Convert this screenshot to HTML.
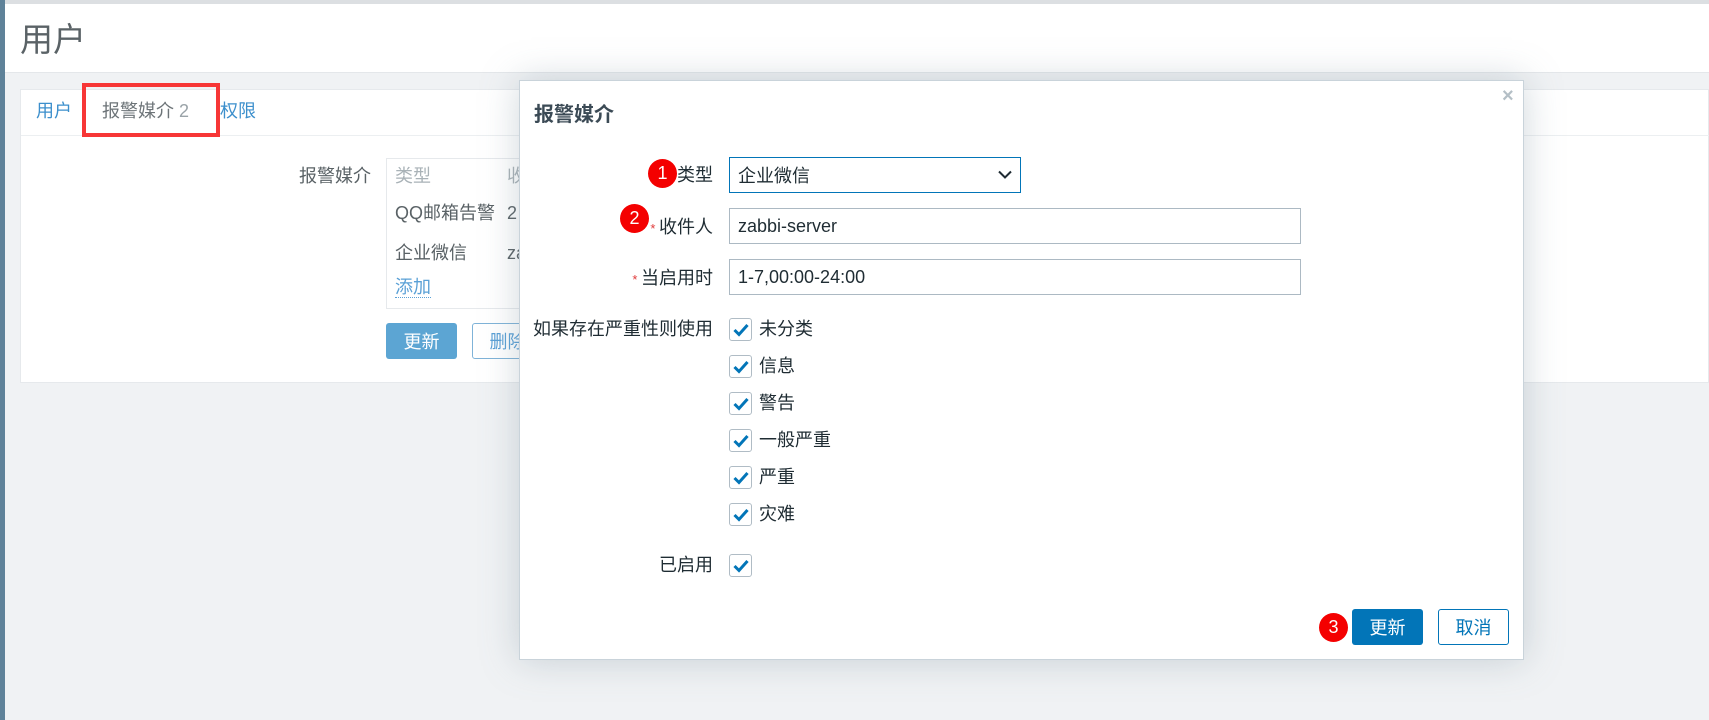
<!DOCTYPE html>
<html><head><meta charset="utf-8"><style>
*{box-sizing:border-box;margin:0;padding:0}
body{width:1709px;height:720px;overflow:hidden;background:#f0f2f4;font-family:"Liberation Sans","Noto Sans CJK SC",sans-serif;font-size:18px;color:#1f2c33;position:relative}
.abs{position:absolute}
.lbar{left:0;top:0;width:5px;height:720px;background:#5f8299}
.topl{left:0;top:0;width:1709px;height:4px;background:#dcdfe2}
.head{left:5px;top:4px;width:1704px;height:69px;background:#fff;border-bottom:1px solid #e4e7ea}
.head span{position:absolute;left:15px;top:18px;font-size:33px;line-height:36px;color:#5a6266}
.panel{left:20px;top:89px;width:1689px;height:294px;background:#fff;border:1px solid #e6e9ec}
.tabline{left:21px;top:135px;width:1688px;height:1px;background:#eceff1}
.t{font-size:18px;line-height:20px;white-space:nowrap}
.redbox{left:82px;top:83px;width:138px;height:54px;border:4px solid #f73636}
.btn{height:36px;border-radius:3px;font-size:18px;display:flex;align-items:center;justify-content:center}
.dlg{left:519px;top:80px;width:1005px;height:580px;background:#fff;border:1px solid #c9d3da;box-shadow:0 0 35px rgba(120,140,155,.35)}
.lab{width:200px;text-align:right;font-size:18px;line-height:20px;color:#1f2c33;white-space:nowrap}
.inp{border:1px solid #acb9c3;height:36px;font-size:18px;padding-left:8px;display:flex;align-items:center;color:#1f2c33}
.cb{width:23px;height:23px;border:1px solid #b0bcc5;border-radius:3px;background:#fff}
.cb svg{position:absolute;left:3px;top:4px}
.cl{font-size:18px;line-height:20px}
.bad{width:29px;height:29px;border-radius:50%;background:#f40000;color:#fff;font-size:18px;display:flex;align-items:center;justify-content:center}
</style></head><body>
<div class="abs topl"></div>
<div class="abs lbar"></div>
<div class="abs head"><span>用户</span></div>
<div class="abs panel"></div>
<div class="abs tabline"></div>
<div class="abs t" style="left:36px;top:101px;color:#3c8fcc">用户</div>
<div class="abs t" style="left:102px;top:101px;color:#6d7478">报警媒介 <span style="color:#9aa3a8">2</span></div>
<div class="abs t" style="left:220px;top:101px;color:#3c8fcc">权限</div>
<div class="abs redbox"></div>
<div class="abs t" style="left:299px;top:166px;color:#5a6266">报警媒介</div>
<div class="abs" style="left:386px;top:158px;width:200px;height:151px;border:1px solid #e6e9ec"></div>
<div class="abs t" style="left:395px;top:166px;color:#a9b2b7">类型</div>
<div class="abs t" style="left:507px;top:166px;color:#a9b2b7">收</div>
<div class="abs t" style="left:395px;top:203px;color:#5a6266">QQ邮箱告警</div>
<div class="abs t" style="left:507px;top:203px;color:#5a6266">2</div>
<div class="abs t" style="left:395px;top:243px;color:#5a6266">企业微信</div>
<div class="abs t" style="left:507px;top:243px;color:#5a6266">za</div>
<div class="abs t" style="left:395px;top:277px;color:#5aa0d6;border-bottom:1px dotted #5aa0d6">添加</div>
<div class="abs btn" style="left:386px;top:323px;width:71px;background:#5ca5d3;color:#fff">更新</div>
<div class="abs btn" style="left:472px;top:323px;width:71px;border:1px solid #7fb3d8;color:#5aa0d6;background:#fff">删除</div>

<div class="abs dlg">
  <div class="abs" style="left:14px;top:22px;font-size:20px;line-height:24px;font-weight:bold;color:#3b4a55">报警媒介</div>
  <div class="abs" style="left:982px;top:4px;font-size:20px;font-weight:bold;color:#b4bfc6">×</div>

  <div class="abs lab" style="left:-7px;top:84px">类型</div>
  <div class="abs inp" style="left:209px;top:76px;width:292px;border-color:#0275b8">企业微信
    <svg class="abs" style="right:8px;top:12px" width="14" height="9" viewBox="0 0 14 9"><path d="M1 1.5L7 7.5L13 1.5" fill="none" stroke="#1f2c33" stroke-width="2"/></svg></div>

  <div class="abs lab" style="left:-7px;top:136px"><span style="color:#e03a3a;font-size:13px">* </span>收件人</div>
  <div class="abs inp" style="left:209px;top:127px;width:572px">zabbi-server</div>

  <div class="abs lab" style="left:-7px;top:187px"><span style="color:#e03a3a;font-size:13px">* </span>当启用时</div>
  <div class="abs inp" style="left:209px;top:178px;width:572px">1-7,00:00-24:00</div>

  <div class="abs lab" style="left:-7px;top:238px">如果存在严重性则使用</div>

  <div class="abs cb" style="left:209px;top:237px"><svg width="16" height="14" viewBox="0 0 16 14"><path d="M1.5 7L6 11.5L14.5 2" fill="none" stroke="#0275b8" stroke-width="3"/></svg></div>
  <div class="abs cl" style="left:239px;top:238px">未分类</div>
  <div class="abs cb" style="left:209px;top:274px"><svg width="16" height="14" viewBox="0 0 16 14"><path d="M1.5 7L6 11.5L14.5 2" fill="none" stroke="#0275b8" stroke-width="3"/></svg></div>
  <div class="abs cl" style="left:239px;top:275px">信息</div>
  <div class="abs cb" style="left:209px;top:311px"><svg width="16" height="14" viewBox="0 0 16 14"><path d="M1.5 7L6 11.5L14.5 2" fill="none" stroke="#0275b8" stroke-width="3"/></svg></div>
  <div class="abs cl" style="left:239px;top:312px">警告</div>
  <div class="abs cb" style="left:209px;top:348px"><svg width="16" height="14" viewBox="0 0 16 14"><path d="M1.5 7L6 11.5L14.5 2" fill="none" stroke="#0275b8" stroke-width="3"/></svg></div>
  <div class="abs cl" style="left:239px;top:349px">一般严重</div>
  <div class="abs cb" style="left:209px;top:385px"><svg width="16" height="14" viewBox="0 0 16 14"><path d="M1.5 7L6 11.5L14.5 2" fill="none" stroke="#0275b8" stroke-width="3"/></svg></div>
  <div class="abs cl" style="left:239px;top:386px">严重</div>
  <div class="abs cb" style="left:209px;top:422px"><svg width="16" height="14" viewBox="0 0 16 14"><path d="M1.5 7L6 11.5L14.5 2" fill="none" stroke="#0275b8" stroke-width="3"/></svg></div>
  <div class="abs cl" style="left:239px;top:423px">灾难</div>

  <div class="abs lab" style="left:-7px;top:474px">已启用</div>
  <div class="abs cb" style="left:209px;top:473px"><svg width="16" height="14" viewBox="0 0 16 14"><path d="M1.5 7L6 11.5L14.5 2" fill="none" stroke="#0275b8" stroke-width="3"/></svg></div>

  <div class="abs btn" style="left:832px;top:528px;width:71px;background:#0275b8;color:#fff">更新</div>
  <div class="abs btn" style="left:918px;top:528px;width:71px;border:1px solid #0275b8;color:#0275b8;background:#fff">取消</div>

  <div class="abs bad" style="left:128px;top:78px">1</div>
  <div class="abs bad" style="left:100px;top:123px">2</div>
  <div class="abs bad" style="left:799px;top:532px">3</div>
</div>
</body></html>
